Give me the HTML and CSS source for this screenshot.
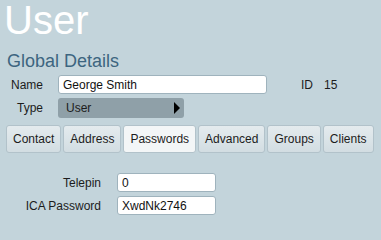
FILE: index.html
```html
<!DOCTYPE html>
<html lang="en">
<head>
    <meta charset="UTF-8">
    <title>User</title>
    <link rel="stylesheet" href="styles.css">
</head>
<body>
    <div class="page">
        <h1 class="page-title">User</h1>
        <h2 class="section-title">Global Details</h2>

        <div class="details">
            <label class="field-label" for="name">Name</label>
            <div class="field-line">
                <input type="text" id="name" class="text-input name-input" value="George Smith">
                <span class="id-label">ID</span>
                <span class="id-value">15</span>
            </div>
            <label class="field-label">Type</label>
            <div class="field-line">
                <div class="type-select">
                    <span>User</span>
                    <span class="arrow"></span>
                </div>
            </div>
        </div>

        <div class="tabs">
            <button class="tab">Contact</button>
            <button class="tab">Address</button>
            <button class="tab active">Passwords</button>
            <button class="tab">Advanced</button>
            <button class="tab">Groups</button>
            <button class="tab">Clients</button>
        </div>

        <div class="panel">
            <label class="field-label" for="telepin">Telepin</label>
            <input type="text" id="telepin" class="text-input short-input" value="0">
            <label class="field-label" for="ica">ICA Password</label>
            <input type="text" id="ica" class="text-input short-input" value="XwdNk2746">
        </div>
    </div>
</body>
</html>
```

FILE: styles.css
```css
* {
    margin: 0;
    padding: 0;
    box-sizing: border-box;
}

body {
    font-family: "Liberation Sans", Arial, sans-serif;
    font-size: 12px;
    background-color: #c3d4db;
    color: #1c1c1c;
    height: 240px;
    overflow: hidden;
}

.page {
    padding: 2px 6px 0;
}

.page-title {
    font-size: 40px;
    font-weight: normal;
    line-height: 44px;
    color: #fff;
    margin-top: -4px;
    margin-left: -2px;
}

.section-title {
    font-size: 18px;
    font-weight: normal;
    line-height: 21px;
    color: #3d6580;
    margin-top: 9px;
    margin-left: 1px;
}

.details {
    display: grid;
    grid-template-columns: 37px auto;
    column-gap: 15px;
    row-gap: 4px;
    align-items: center;
    margin-top: 3px;
}

.field-label {
    text-align: right;
}

.field-line {
    display: flex;
    align-items: center;
}

.text-input {
    height: 19px;
    border: 1px solid #9fb3bd;
    border-radius: 3px;
    background-color: #fff;
    padding: 0 4px;
    font-family: "Liberation Sans", Arial, sans-serif;
    font-size: 12px;
    color: #111;
    outline: none;
}

.name-input {
    width: 209px;
}

.id-label {
    margin-left: 34px;
}

.id-value {
    margin-left: 11px;
}

.type-select {
    width: 126px;
    height: 20px;
    background-color: #8fa0a8;
    border-radius: 3px;
    display: flex;
    align-items: center;
    justify-content: space-between;
    padding: 0 4px 0 8px;
}

.arrow {
    width: 0;
    height: 0;
    border-left: 6px solid #000;
    border-top: 6px solid transparent;
    border-bottom: 6px solid transparent;
}

.tabs {
    display: flex;
    gap: 2px;
    margin-top: 7px;
}

.tab {
    font-family: "Liberation Sans", Arial, sans-serif;
    font-size: 12px;
    line-height: 14px;
    color: #1c1c1c;
    padding: 6px 6px;
    border: 1px solid #b2c2ca;
    border-radius: 3px;
    background: linear-gradient(#e4ebee, #d2dde2);
    cursor: pointer;
}

.tab.active {
    background: #f3f6f7;
}

.panel {
    display: grid;
    grid-template-columns: 95px 99px;
    column-gap: 16px;
    row-gap: 4px;
    align-items: center;
    margin-top: 20px;
}
```
